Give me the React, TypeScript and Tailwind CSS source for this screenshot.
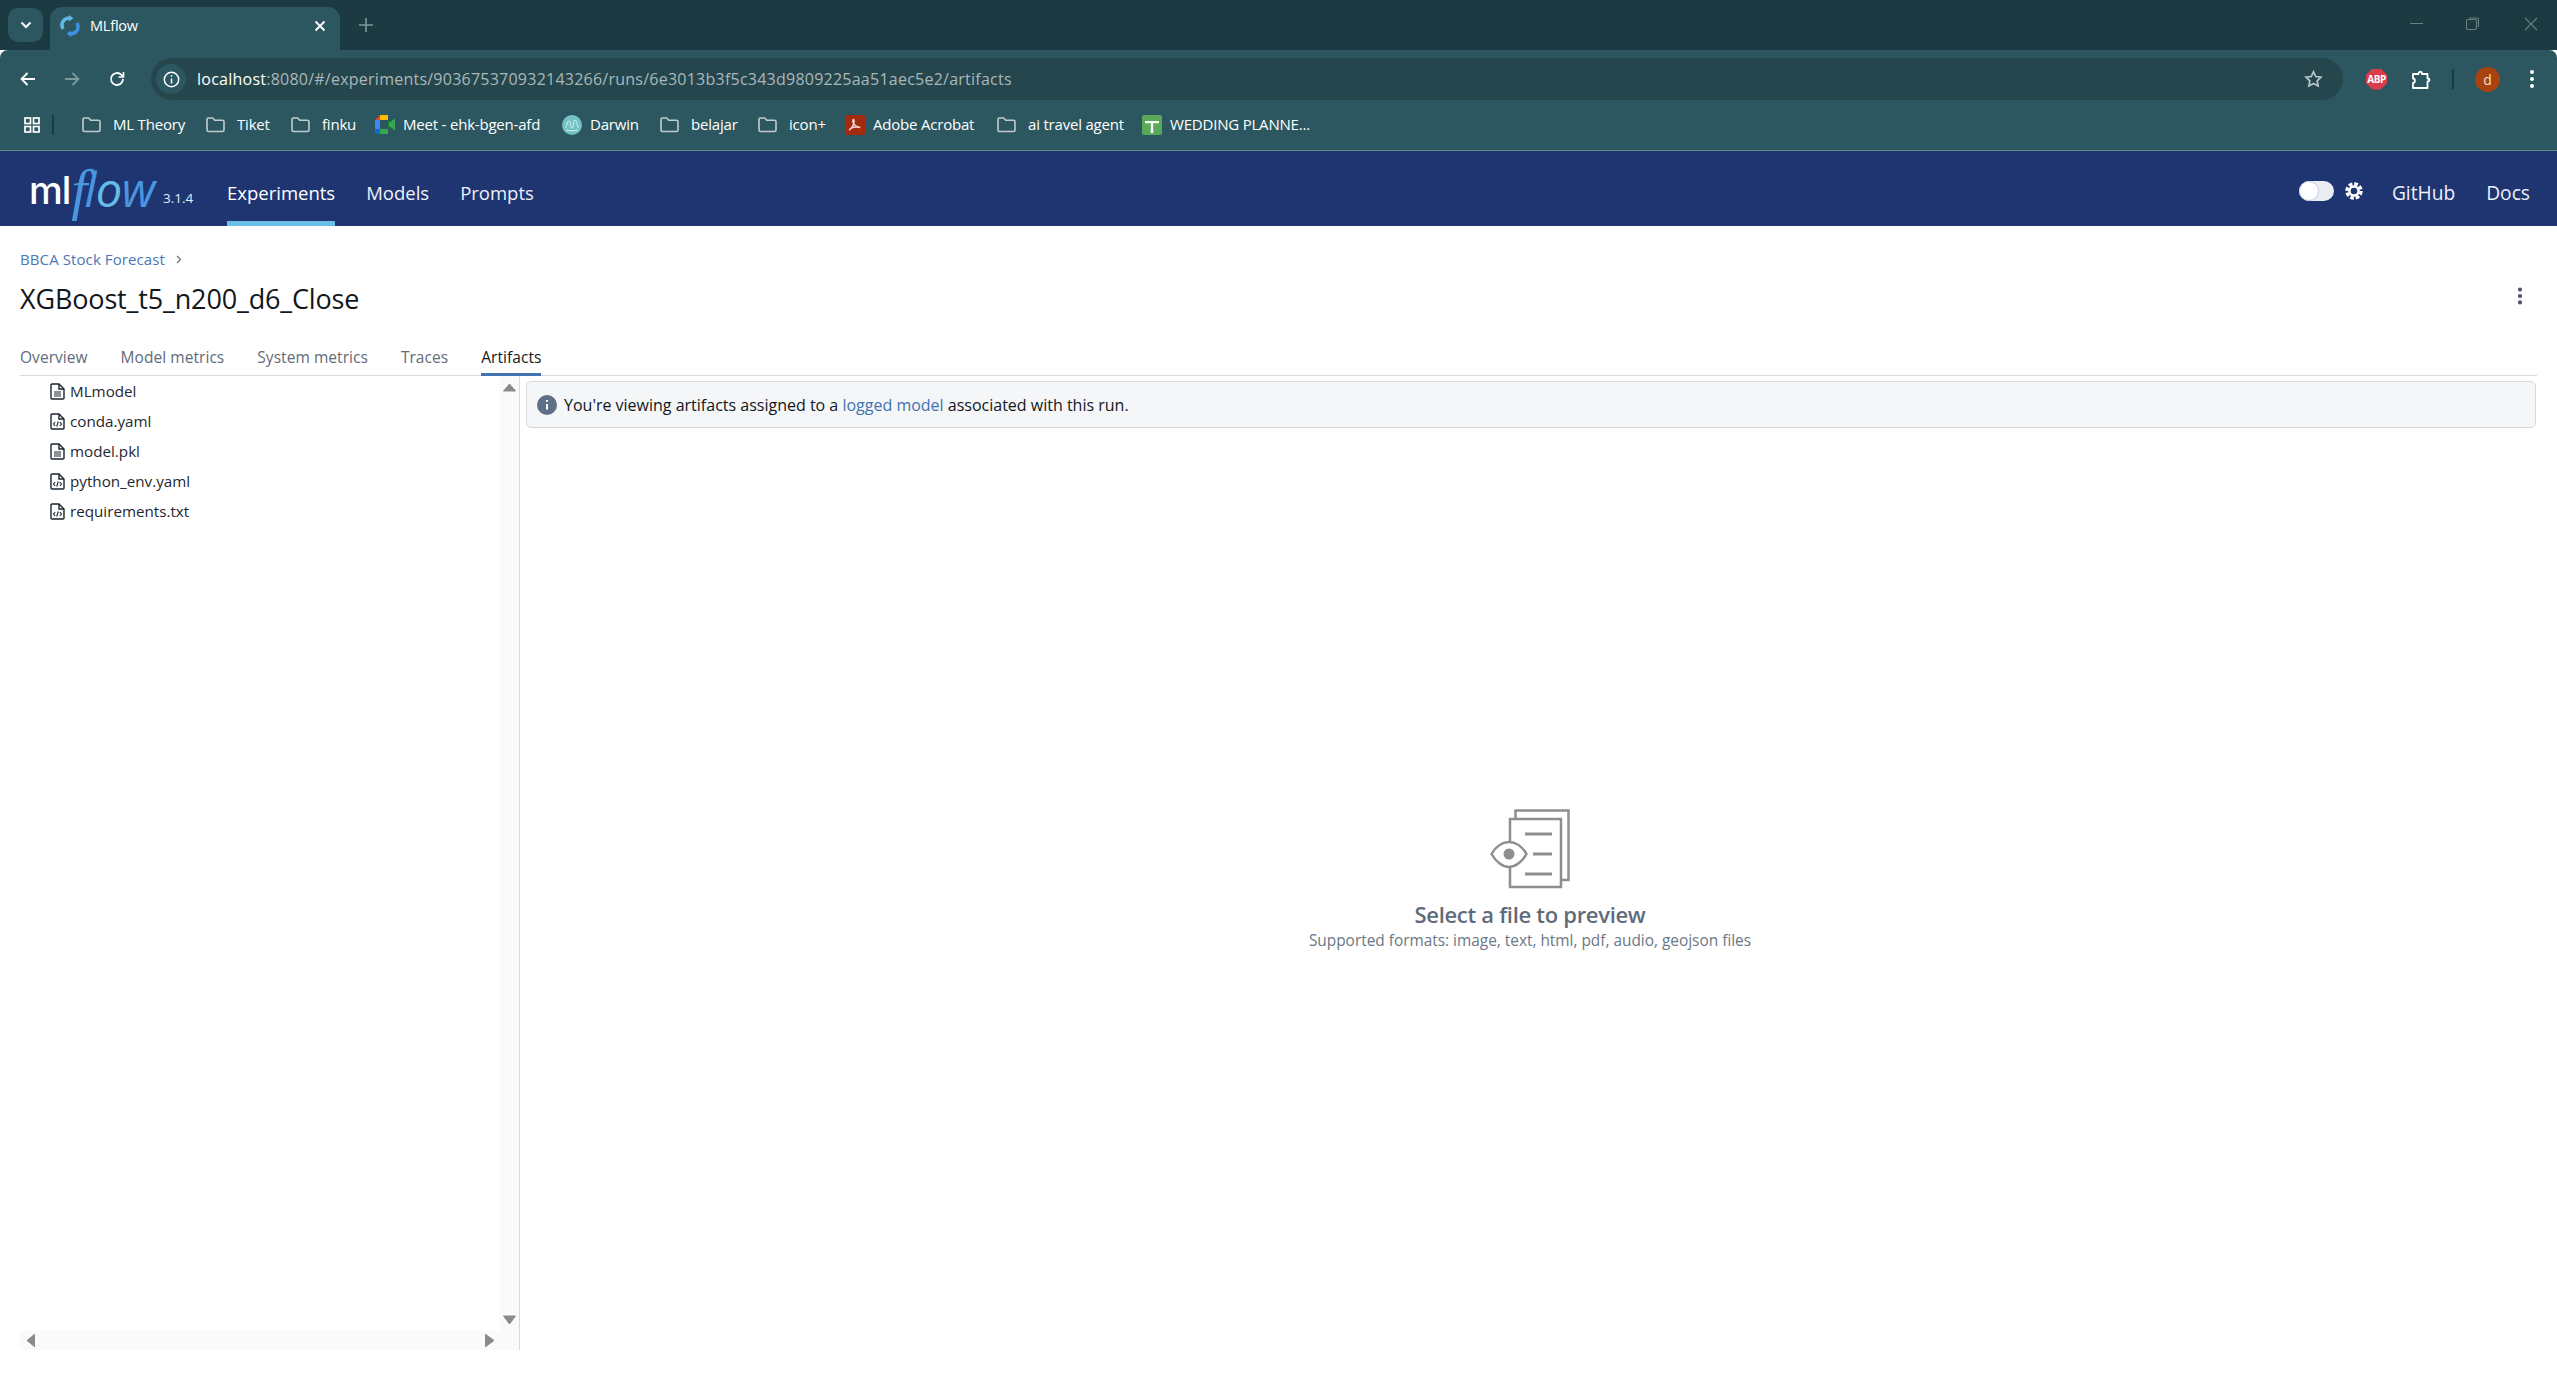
import type { FC } from "react";
import { MoreVertical } from "lucide-react";

const FolderIcon: FC = () => (
  <svg width="21" height="19" viewBox="0 0 21 19" fill="none" stroke="#c3ccce" strokeWidth="1.6">
    <path d="M2 4.5a1.5 1.5 0 0 1 1.5-1.5h4.2l2 2.2h7.8a1.5 1.5 0 0 1 1.5 1.5v8.3a1.5 1.5 0 0 1-1.5 1.5h-14a1.5 1.5 0 0 1-1.5-1.5z" />
  </svg>
);

const MeetIcon: FC = () => (
  <svg width="20" height="19" viewBox="0 0 20 19">
    <path d="M0 5 5 0v5z" fill="#ea4335" />
    <path d="M5 0h8v5H5z" fill="#fbbc04" />
    <path d="M0 5h5v9H0z" fill="#4285f4" />
    <path d="M0 14h5v5H2a2 2 0 0 1-2-2z" fill="#1967d2" />
    <path d="M5 14h8v5H5z" fill="#34a853" />
    <path d="M13 5v9l2-1.5V6.500z" fill="#188038" />
    <path d="m14 8 6-4.500v12L14 11z" fill="#34a853" />
  </svg>
);

const DarwinIcon: FC = () => (
  <svg width="20" height="20" viewBox="0 0 20 20" fill="none">
    <circle cx="10" cy="10" r="10" fill="#74c2c6" />
    <path d="M3 13c2-1 2-7 4-7s1 7 3 7 1-8 3-8 2 7 4 8" stroke="#d8f1f0" strokeWidth="1" />
    <path d="M4 15c3 1 9 1 12 0" stroke="#d8f1f0" strokeWidth="1" />
  </svg>
);

const AcrobatIcon: FC = () => (
  <svg width="20" height="20" viewBox="0 0 20 20" fill="none">
    <rect width="20" height="20" rx="2" fill="#a32a0c" />
    <path d="M4 15c2-1 4-4 5-7.500.3-1.500 0-3-.7-3s-.7 2 0 3.500c1.200 2.500 3 4 7 4.500-3-.8-7-.3-9 .5" stroke="#f2d6cf" strokeWidth="1.400" />
  </svg>
);

const GreenIcon: FC = () => (
  <svg width="20" height="20" viewBox="0 0 20 20">
    <rect width="20" height="20" rx="2" fill="#5aa85a" />
    <path d="M3 6h14v2.200h-5.800V18H8.800V8.200H3z" fill="#f4fff4" />
  </svg>
);

const FileIcon: FC<{ code?: boolean }> = ({ code }) => (
  <svg width="15" height="17" viewBox="0 0 15 17" fill="none" stroke="#1a2430" strokeWidth="1.400">
    <path d="M1 2a1 1 0 0 1 1-1h7l5 5v9a1 1 0 0 1-1 1H2a1 1 0 0 1-1-1z" />
    <path d="M9 1v5h5" />
    {code ? (
      <path d="M5.200 9 3.500 11l1.700 2M9.800 9l1.700 2-1.700 2M8.300 8.500l-1.600 5" strokeWidth="1.100" />
    ) : (
      <path d="M4 9h7M4 11h7M4 13h7" strokeWidth="1.200" />
    )}
  </svg>
);

const Triangle: FC<{ dir: "up" | "down" | "left" | "right" }> = ({ dir }) => {
  const points = {
    up: "6,1 12,8 0,8",
    down: "0,1 12,1 6,9",
    left: "9,0 9,13 1,6.500",
    right: "0,0 0,13 9,6.500",
  }[dir];
  return (
    <svg width={dir === "up" || dir === "down" ? 13 : 9} height={dir === "up" || dir === "down" ? 9 : 13} viewBox={dir === "up" || dir === "down" ? "0 0 12 9" : "0 0 9 13"}>
      <polygon points={points} fill="#8a8a8a" stroke="#8a8a8a" strokeLinejoin="round" />
    </svg>
  );
};

const EmptyIcon: FC = () => (
  <svg width="80" height="80" viewBox="0 0 80 80" fill="none" stroke="#8e8e8e" strokeWidth="2.500">
    <path d="M25.500 9V1.500h53v69.500H71" />
    <path d="M20 32V10h51v68H20V58" />
    <path d="M1.500 45C6 37 13 33 19 33s13 4 17.500 12C32 53 25 58 19 58S6 53 1.500 45z" />
    <circle cx="19" cy="45" r="5.500" fill="#8e8e8e" stroke="none" />
    <path d="M35 25h27M43 45h19M35 65h27" strokeWidth="3" />
  </svg>
);

const bookmarks = [
  { label: "ML Theory", icon: <FolderIcon />, className: "w-[124px] gap-[11px]" },
  { label: "Tiket", icon: <FolderIcon />, className: "w-[85px] gap-[11px]" },
  { label: "finku", icon: <FolderIcon />, className: "w-[85px] gap-[11px]" },
  { label: "Meet - ehk-bgen-afd", icon: <MeetIcon />, className: "w-[187px] gap-[8px]" },
  { label: "Darwin", icon: <DarwinIcon />, className: "w-[97px] gap-[8px]" },
  { label: "belajar", icon: <FolderIcon />, className: "w-[98px] gap-[11px]" },
  { label: "icon+", icon: <FolderIcon />, className: "w-[88px] gap-[11px]" },
  { label: "Adobe Acrobat", icon: <AcrobatIcon />, className: "w-[151px] gap-[8px]" },
  { label: "ai travel agent", icon: <FolderIcon />, className: "w-[146px] gap-[11px]" },
  { label: "WEDDING PLANNE...", icon: <GreenIcon />, className: "w-[170px] gap-[8px]" },
];

const tabs = ["Overview", "Model metrics", "System metrics", "Traces", "Artifacts"];

const files = [
  { name: "MLmodel", code: false },
  { name: "conda.yaml", code: true },
  { name: "model.pkl", code: false },
  { name: "python_env.yaml", code: true },
  { name: "requirements.txt", code: true },
];

const App: FC = () => {
  return (
    <div className="flex h-screen flex-col overflow-hidden bg-white font-['Open_Sans',sans-serif] text-[#1f2733]">
      {/* browser tab strip */}
      <div className="flex h-[50px] shrink-0 bg-[#1b3a42] pl-[8px]">
        <div className="mt-[8px] flex h-[34px] w-[35px] items-center justify-center rounded-[10px] bg-[#2c5760]">
          <svg width="12" height="8" viewBox="0 0 12 8" fill="none" stroke="#fff" strokeWidth="2">
            <path d="m1.500 1.500 4.500 4.500 4.500-4.500" />
          </svg>
        </div>
        <div className="mt-[7px] ml-[7px] flex h-[43px] w-[290px] items-center rounded-t-[12px] bg-[#2c5760] pb-[6px] pl-[10px] pr-[14px]">
          <svg width="20" height="22" viewBox="0 0 20 22" fill="none" strokeWidth="3.500">
            <path d="M3 14C0 8 4 3 10 3" stroke="#62b6e8" />
            <path d="M17 8c3 6-1 11-7 11" stroke="#3f92e0" />
            <path d="M9 0v6.500l4.500-3.200z" fill="#62b6e8" />
            <path d="M11 22v-6.500l-4.500 3.200z" fill="#3f92e0" />
          </svg>
          <span className="ml-[10px] flex-1 text-[14.500px] tracking-[-0.2px] text-white">MLflow</span>
          <svg width="12" height="12" viewBox="0 0 12 12" stroke="#fff" strokeWidth="1.800">
            <path d="m1.500 1.500 9 9m0-9-9 9" />
          </svg>
        </div>
        <svg className="mt-[18px] ml-[19px]" width="14" height="14" viewBox="0 0 14 14" stroke="#83999e" strokeWidth="1.600">
          <path d="M7 0v14M0 7h14" />
        </svg>
        <div className="ml-auto flex items-center pb-[3px]">
          <div className="h-px w-[13px] bg-[#69817f]" />
          <svg className="ml-[43px]" width="13" height="13" viewBox="0 0 13 13" fill="none" stroke="#69817f" strokeWidth="1.100">
            <rect x="0.500" y="2.500" width="10" height="10" rx="1.500" />
            <path d="M3 1h8a1.500 1.500 0 0 1 1.500 1.500V10" />
          </svg>
          <svg className="mt-px mr-[19px] ml-[45px]" width="14" height="14" viewBox="0 0 14 14" stroke="#69817f" strokeWidth="1.100">
            <path d="m1 1 12 12m0-12L1 13" />
          </svg>
        </div>
      </div>

      {/* address bar */}
      <div className="flex h-[50px] shrink-0 items-center rounded-t-[8px] bg-[#2c5760] pt-[8px]">
        <svg className="ml-[20px]" width="15" height="14" viewBox="0 0 15 14" fill="none" stroke="#fff" strokeWidth="1.800">
          <path d="M15 7H2M7.500 1 1.500 7l6 6" />
        </svg>
        <svg className="ml-[30px]" width="15" height="14" viewBox="0 0 15 14" fill="none" stroke="#7f9a9e" strokeWidth="1.800">
          <path d="M0 7h13M7.500 1l6 6-6 6" />
        </svg>
        <svg className="ml-[29px]" width="16" height="16" viewBox="0 0 16 16" fill="none" stroke="#fff" strokeWidth="1.800">
          <path d="M14 8a6 6 0 1 1-1.800-4.300L14 5.500" />
          <path d="M14.500 1v5h-5" strokeWidth="1.600" />
        </svg>
        <div className="ml-[26px] flex h-[42px] w-[2192px] items-center rounded-full bg-[#26464e] pl-[5px]">
          <div className="flex h-[30px] w-[30px] items-center justify-center rounded-full bg-[#2c5760]">
            <svg width="17" height="17" viewBox="0 0 17 17" fill="none" stroke="#fff" strokeWidth="1.500">
              <circle cx="8.500" cy="8.500" r="7.200" />
              <path d="M8.500 7.500v5M8.500 4.200v1.600" />
            </svg>
          </div>
          <span className="ml-[11px] whitespace-nowrap text-[16px] tracking-[0.24px] text-[#a9b8ba]">
            <span className="text-white">localhost</span>:8080/#/experiments/903675370932143266/runs/6e3013b3f5c343d9809225aa51aec5e2/artifacts
          </span>
          <svg className="mr-[20px] ml-auto" width="19" height="18" viewBox="0 0 19 18" fill="none" stroke="#b9c6c8" strokeWidth="1.700">
            <path d="m9.500 1.800 2.300 4.700 5.200.7-3.800 3.600.9 5.200-4.600-2.500-4.600 2.500.9-5.200L2 7.200l5.200-.7z" />
          </svg>
        </div>
        <div className="relative ml-[23px] flex h-[21px] w-[21px] items-center justify-center bg-[#db3c4a] [clip-path:polygon(30%_0,70%_0,100%_30%,100%_70%,70%_100%,30%_100%,0_70%,0_30%)]">
          <span className="text-[10px] font-bold tracking-[-0.5px] text-white">ABP</span>
        </div>
        <svg className="ml-[24px]" width="21" height="21" viewBox="0 0 21 21" fill="none" stroke="#fff" strokeWidth="1.800">
          <path d="M2 5h5.500c0-3 3.500-3 3.500 0h5.500v4.500c2.500 0 2.500 3 0 3V19H2v-5c2.500 0 2.500-4.500 0-4.500z" strokeLinejoin="round" />
        </svg>
        <div className="ml-[20px] h-[20px] w-[2px] bg-[#1b3a42]" />
        <div className="ml-[21px] flex h-[25px] w-[25px] items-center justify-center rounded-full bg-[#a8430f] text-[14px] text-[#f5ddcc]">d</div>
        <div className="ml-[30px] flex flex-col gap-[3px]">
          <div className="h-[4px] w-[4px] rounded-full bg-white" />
          <div className="h-[4px] w-[4px] rounded-full bg-white" />
          <div className="h-[4px] w-[4px] rounded-full bg-white" />
        </div>
      </div>

      {/* bookmarks */}
      <div className="flex h-[51px] shrink-0 items-center border-b border-b-[#5f8a88] bg-[#2c5760] pb-[1px] pl-[24px]">
        <svg width="16" height="16" viewBox="0 0 16 16" fill="none" stroke="#fff" strokeWidth="1.700">
          <rect x="1" y="1" width="5.500" height="5.500" />
          <rect x="9.500" y="1" width="5.500" height="5.500" />
          <rect x="1" y="9.500" width="5.500" height="5.500" />
          <rect x="9.500" y="9.500" width="5.500" height="5.500" />
        </svg>
        <div className="mx-[12px] h-[20px] w-[2px] bg-[#1b3a42]" />
        <div className="ml-[15px] flex items-center">
          {bookmarks.map((b) => (
            <div key={b.label} className={`flex shrink-0 items-center ${b.className}`}>
              {b.icon}
              <span className="whitespace-nowrap text-[15px] tracking-[-0.2px] text-white">{b.label}</span>
            </div>
          ))}
        </div>
      </div>

      {/* mlflow header */}
      <header className="flex h-[75px] shrink-0 items-stretch bg-[#1e3571] pl-[29px] pr-[27px] text-[18.500px] text-[#edf1f9]">
        <div className="flex w-[198px] shrink-0 items-center pt-[2px]">
          <span className="font-['Inter',sans-serif] text-[38px] leading-none font-medium tracking-[-1px] text-white">ml</span>
          <span className="ml-[1px] font-['Liberation_Serif',serif] text-[58px] leading-none text-[#4a95e0] italic">f</span>
          <span className="ml-[-3px] font-['Open_Sans',sans-serif] text-[47px] leading-none font-medium tracking-[-0.5px] text-[#4a95e0] italic">
            l<span className="text-[#63bde8]">o</span>w
          </span>
          <span className="mt-[18px] ml-[8px] text-[13.500px] text-[#e6ebf5]">3.1.4</span>
        </div>
        <nav className="flex gap-[31px]">
          <div className="flex items-center border-b-[5px] border-[#6cbde9] pt-[13px] text-white">Experiments</div>
          <div className="flex items-center pt-[8px]">Models</div>
          <div className="flex items-center pt-[8px]">Prompts</div>
        </nav>
        <div className="ml-auto flex items-center text-[19.200px]">
          <div className="relative mt-[4px] h-[20px] w-[35px] rounded-full bg-[#e9edf3]">
            <div className="h-[20px] w-[20px] rounded-full border border-[#c3cfe0] bg-white" />
          </div>
          <svg className="mt-[4px] ml-[10px]" width="20" height="20" viewBox="0 0 24 24" fill="none" stroke="#fff">
            <circle cx="12" cy="12" r="5.500" strokeWidth="3" />
            <circle cx="12" cy="12" r="8.500" strokeWidth="4" strokeDasharray="4.500 2.170" />
          </svg>
          <span className="ml-[28px] pt-[9px]">GitHub</span>
          <span className="ml-[31px] pt-[9px]">Docs</span>
        </div>
      </header>

      {/* run page */}
      <main className="flex min-h-0 flex-1 flex-col px-[20px]">
        <div className="mt-[23px] flex h-[20px] items-center text-[15px] tracking-[0.1px] text-[#4a78b5]">
          BBCA Stock Forecast
          <svg className="ml-[11px]" width="6" height="9" viewBox="0 0 6 9" fill="none" stroke="#6b7785" strokeWidth="1.300">
            <path d="m1 1 3.500 3.500L1 8" />
          </svg>
        </div>
        <div className="mt-[10px] flex h-[38px] items-center justify-between pr-[6px]">
          <h1 className="text-[27px] leading-none font-medium tracking-[-0.15px] text-[#11171c]">XGBoost_t5_n200_d6_Close</h1>
          <MoreVertical className="mb-[5px]" size={22} strokeWidth={2.500} color="#47525f" />
        </div>
        <div className="mt-[24px] flex h-[35px] gap-[33px] border-b border-[#d5dae0] text-[15.500px] font-medium tracking-[0.05px] text-[#5f6b7a]">
          {tabs.map((tab) =>
            tab === "Artifacts" ? (
              <div key={tab} className="-mb-px border-b-[3px] border-[#4272b0] pt-[5px] text-[#11171c]">{tab}</div>
            ) : (
              <div key={tab} className="pt-[5px]">{tab}</div>
            )
          )}
        </div>

        <div className="flex h-[974px] shrink-0">
          {/* artifact tree */}
          <div className="flex w-[500px] shrink-0 flex-col border-r border-[#d5dae0]">
            <div className="flex min-h-0 flex-1">
              <div className="flex-1 pl-[30px]">
                {files.map((f) => (
                  <div key={f.name} className="flex h-[30px] items-center gap-[5px] text-[15.200px] text-[#1f2733]">
                    <FileIcon code={f.code} />
                    {f.name}
                  </div>
                ))}
              </div>
              <div className="flex w-[19px] flex-col items-center justify-between bg-[#fafafa] pt-[7px] pb-[7px]">
                <Triangle dir="up" />
                <Triangle dir="down" />
              </div>
            </div>
            <div className="flex h-[19px] shrink-0 items-center justify-between bg-[#fafafa] pr-[25px] pl-[6px]">
              <Triangle dir="left" />
              <Triangle dir="right" />
            </div>
          </div>

          {/* preview pane */}
          <div className="flex min-w-0 flex-1 flex-col items-center pt-[5px] pr-[1px] pl-[6px]">
            <div className="flex h-[47px] w-full items-center rounded-[5px] border border-[#d5dae0] bg-[#f5f6f8] pl-[10px] text-[16px] font-medium text-[#11171c]">
              <svg width="20" height="20" viewBox="0 0 20 20">
                <circle cx="10" cy="10" r="10" fill="#5f6f85" />
                <path d="M10 9v5.500M10 5v1.800" stroke="#fff" strokeWidth="2" />
              </svg>
              <span className="ml-[7px]">
                You're viewing artifacts assigned to a <span className="text-[#4272b0]">logged model</span> associated with this run.
              </span>
            </div>
            <div className="flex w-full flex-col items-center pr-[2px]">
              <div className="mt-[381px]">
                <EmptyIcon />
              </div>
              <div className="mt-[10px] text-[22px] leading-[30px] font-semibold tracking-[-0.3px] text-[#5f6b7a]">Select a file to preview</div>
              <div className="mt-[2px] text-[15.400px] leading-[20px] text-[#6b7785]">Supported formats: image, text, html, pdf, audio, geojson files</div>
            </div>
          </div>
        </div>
      </main>
    </div>
  );
};

export default App;
